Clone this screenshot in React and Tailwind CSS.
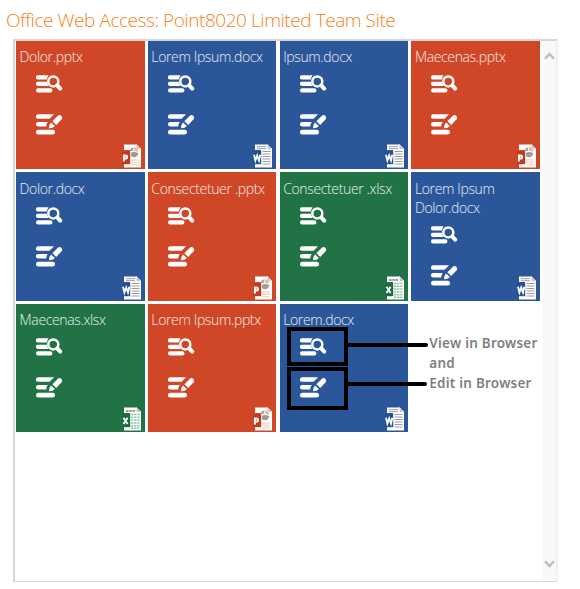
const COLORS = { ppt: 'bg-[#cf4727]', word: 'bg-[#2b579a]', excel: 'bg-[#217346]' };
const BANDS = { ppt: '#c23a1a', word: '#234f95', excel: '#1b6b3f' };

const FILES = [
  { name: 'Dolor.pptx', type: 'ppt' },
  { name: 'Lorem Ipsum.docx', type: 'word' },
  { name: 'Ipsum.docx', type: 'word' },
  { name: 'Maecenas.pptx', type: 'ppt' },
  { name: 'Dolor.docx', type: 'word' },
  { name: 'Consectetuer .pptx', type: 'ppt' },
  { name: 'Consectetuer .xlsx', type: 'excel' },
  { name: 'Lorem Ipsum Dolor.docx', type: 'word' },
  { name: 'Maecenas.xlsx', type: 'excel' },
  { name: 'Lorem Ipsum.pptx', type: 'ppt' },
  { name: 'Lorem.docx', type: 'word', annotated: true },
];

function ViewIcon() {
  return (
    <svg className="block h-[18px] w-[27px]" viewBox="0 0 27 18" fill="#fff">
      <path d="M2 .3H12.6Q11.2 2 10.8 4.5H2A2.1 2.1 0 0 1 2 .3Z" />
      <path d="M2 6.7H10.8Q11.2 9.2 12.8 10.9H2A2.1 2.1 0 0 1 2 6.7Z" />
      <rect x="0" y="13.3" width="16.4" height="4.3" rx="2.1" />
      <circle cx="17.3" cy="6.4" r="5" fill="none" stroke="#fff" strokeWidth="2.5" />
      <path d="M21.2 10.4L24.2 13.6" stroke="#fff" strokeWidth="4" strokeLinecap="round" />
    </svg>
  );
}

function EditIcon() {
  return (
    <svg className="block h-[21px] w-[27px]" viewBox="0 0 27 21" fill="#fff">
      <path d="M2.2 .3H18L13.6 4.8H2.2A2.25 2.25 0 0 1 2.2 .3Z" />
      <path d="M2.2 7.9H11.8Q10.2 9.6 10.2 12.4H2.2A2.25 2.25 0 0 1 2.2 7.9Z" />
      <rect x="0" y="15.8" width="19" height="4.7" rx="2.35" />
      <path d="M16.4 7.2L21.6 2Q23.4 .3 25.2 1.8Q27 3.5 25.6 5.2L20.2 10.9Z" />
      <path d="M15 8.5L18.9 12.1Q17 14.4 13 14.3Q12.8 10.8 15 8.5Z" />
    </svg>
  );
}

function FileIcon({ type }) {
  return (
    <svg className="block h-[24px] w-[20px]" viewBox="0 0 20 24">
      <path d="M2 .5H14.5L19 5V23.5H2V19.5H8V6H2Z" fill="#fff" />
      <path d="M0 7.3H8.2V20.2H0Z" fill={BANDS[type]} />
      <path d="M14.3 .5V5.2H19Z" fill="#b9bcc2" stroke="#fff" strokeWidth=".6" />
      {type === 'word' && (
        <>
          <path d="M4 2.7H13M4 4.7H13M9.5 7.5H17.5M9.5 10H17.5M9.5 12.5H17.5M9.5 15H17.5M9.5 17.5H17.5M9.5 20H17.5" stroke="#9a9da3" strokeWidth="1" />
          <path d="M1 10.8L2.4 16.5L4.2 11.5L6 16.5L7.3 10.8" fill="none" stroke="#fff" strokeWidth="1.9" />
        </>
      )}
      {type === 'ppt' && (
        <>
          <path d="M11.3 3.2V7H7.5Q7.8 4 11.3 3.2Z" fill="#a8a8a8" />
          <path d="M12.2 3Q15.8 4 16 8L12.2 6.6Z" fill="#f4ad92" />
          <path d="M9 8.8L12 7.8L16.3 9Q15.5 13.3 12 13.3Q9.8 13.3 9 12Z" fill="#9c9c9c" />
          <path d="M9.3 16H17M9.3 18.2H17M9.3 20.7H17" stroke="#f5c6ad" strokeWidth="1.1" />
          <path d="M1.9 17.6V11.6H3.5Q5 11.6 5 13Q5 14.6 3.5 14.6H2" fill="none" stroke="#fff" strokeWidth="2" />
        </>
      )}
      {type === 'excel' && (
        <>
          <path d="M4 4H6.5M7.3 4H9.8M10.6 4H13" stroke="#777" strokeWidth="1.6" />
          <path d="M9 7.5H17.5M9 10.3H17.5M9 13.1H17.5M9 15.9H17.5M9 18.7H17.5M9 21.2H17.5" stroke="#8fc3a4" strokeWidth="1.5" />
          <path d="M11.6 6.5V22M14.8 6.5V22" stroke="#fff" strokeWidth=".8" />
          <path d="M1.5 10.8L5.6 17M5.6 10.8L1.5 17" fill="none" stroke="#fff" strokeWidth="1.9" />
        </>
      )}
    </svg>
  );
}

function Tile({ file }) {
  return (
    <div className={`relative flex h-[128.3px] flex-col pl-[3.6px] pt-[6.3px] ${COLORS[file.type]}`}>
      <div className="w-[122px] text-[14px] font-light leading-[19px] tracking-[-0.36px] text-white/90">{file.name}</div>
      <div className="flex flex-col gap-[21px] pl-[16.4px] pt-[9px]">
        <ViewIcon />
        <EditIcon />
      </div>
      <div className="absolute bottom-[1px] right-[3px]">
        <FileIcon type={file.type} />
      </div>
      {file.annotated && (
        <>
          <div className="absolute left-[7px] top-[23px] h-[39px] w-[61px] border-4 border-black" />
          <div className="absolute left-[7px] top-[63px] h-[43px] w-[61px] border-4 border-black" />
          <div className="absolute left-[66px] top-[39px] h-[4px] w-[82px] rounded-r-full bg-black" />
          <div className="absolute left-[66px] top-[78px] h-[4px] w-[81px] rounded-r-full bg-black" />
        </>
      )}
    </div>
  );
}

function Chevron({ down }) {
  return (
    <svg className="h-[8px] w-[11px]" viewBox="0 0 11 8" fill="none" stroke="#bdbdbd" strokeWidth="2.3">
      <path d={down ? 'M1 1.3L5.5 6L10 1.3' : 'M1 6.7L5.5 2L10 6.7'} />
    </svg>
  );
}

export default function App() {
  return (
    <div className="h-[589px] w-[580px] overflow-hidden bg-white font-['Open_Sans','Noto_Sans',sans-serif]">
      <h1 className="h-[39px] whitespace-nowrap pl-[6px] pt-[7px] text-[19px] font-light leading-[26px] tracking-[-0.44px] text-[#f58220]">
        Office Web Access: Point8020 Limited Team Site
      </h1>
      <div className="ml-[13px] flex h-[543px] w-[545px] justify-between border-2 border-b border-r-2 border-[#d6d6d6] border-r-[#f0f0f0]">
        <div className="ml-[1px] grid w-[524px] grid-cols-4 content-start gap-[3.1px]">
          {FILES.map((file) => (
            <Tile key={file.name} file={file} />
          ))}
          <div className="whitespace-nowrap pl-[18px] pt-[29px] font-['Noto_Sans',sans-serif] text-[13.5px] font-semibold leading-[20px] tracking-[0.23px] text-[#808080]">
            View in Browser
            <br />
            and
            <br />
            Edit in Browser
          </div>
        </div>
        <div className="flex w-[13px] flex-col items-center justify-between bg-[#f8f8f8] pb-[13px] pt-[11px]">
          <Chevron />
          <Chevron down />
        </div>
      </div>
    </div>
  );
}
